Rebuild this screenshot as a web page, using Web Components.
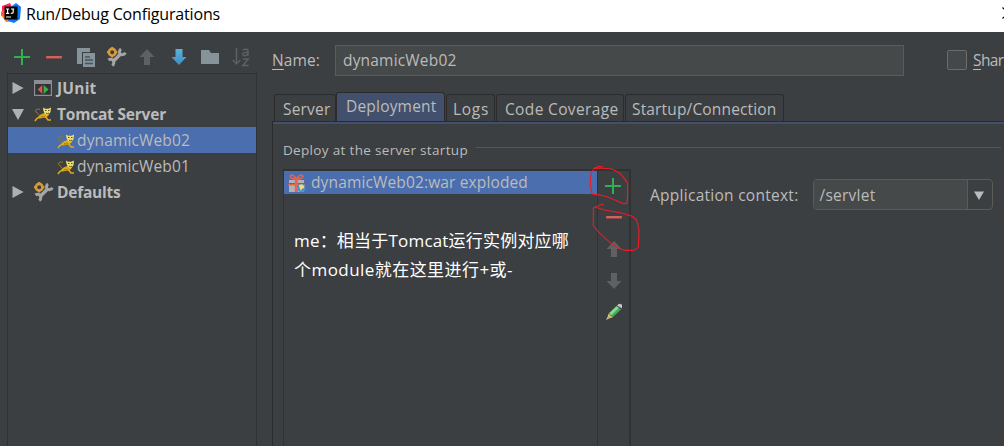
<!DOCTYPE html>
<html lang="zh">
<head>
<meta charset="utf-8">
<title>Run/Debug Configurations</title>
<style>
html,body{margin:0;height:100%;overflow:hidden;background:#3c3f41}
body{font:15.5px/20px "Open Sans","Noto Sans CJK SC",sans-serif;color:#bbb}
</style>
</head>
<body>
<run-dialog></run-dialog>
<script>
const define=(name,html,init)=>customElements.define(name,class extends HTMLElement{
  connectedCallback(){
    if(this.shadowRoot)return;
    this.attachShadow({mode:'open'}).innerHTML=html;
    if(init)init(this,this.shadowRoot);
  }
});

/* A single line of text, letter-spaced to the width given in "fit". */
define('ui-text','<style>:host{display:block;white-space:pre;flex:none}span{display:inline-block}</style><span><slot></slot></span>',(el,root)=>{
  const fit=parseFloat(el.getAttribute('fit'));
  if(!fit)return;
  const s=root.querySelector('span');
  const text=root.querySelector('slot').assignedNodes({flatten:true}).map(n=>n.textContent).join('');
  const w=s.getBoundingClientRect().width;
  s.style.letterSpacing=((fit-w)/[...text].length)+'px';
});

const wrench='<path stroke="#a3a5a6" stroke-width="3.600" d="M6.500 14 13.500 7"/><path fill="none" stroke="#a3a5a6" stroke-width="3" d="M14 2c-1.600 1.200-2 3.300-.8 4.700 1.400 1.500 4 1.300 5.200-.9M1.500 13c1.700-1.200 3.800-.8 4.800.7 1 1.700.4 3.800-1.100 4.800"/><circle cx="5.200" cy="5.200" r="4.200" fill="none" stroke="#3c3f41" stroke-width="2.500"/><circle cx="5.200" cy="5.200" r="3.300" fill="none" stroke="#d99a3a" stroke-width="2.600"/><path fill="#d99a3a" d="M4.200 0h2v2h-2zM4.200 8.500h2v2h-2zM0 4.200h2v2H0zM8.500 4.200h2v2h-2z"/>';
const icons={
  idea:[20,20,'<path fill="#fc801d" d="M0 12 5 19 12 18 9 10z"/><path fill="#fe2857" d="M1 3 9 0l3 6-8 7-3-3z"/><path fill="#fc5f3d" d="M0 9l4-3v6l-4 1z"/><path fill="#087cfa" d="M11 3l4-3 5 4-1 12-6 4-6-2z"/><path d="M3.500 3.500h13v13h-13z"/><path fill="none" stroke="#fff" stroke-width="1.200" d="M5 6h3.200M6.600 6v4.300M5 10.300h3.200M10 6h3.200M12.200 6v3c0 1.300-1.500 1.600-2.400.9M5 14h5"/>'],
  plus:[16,16,'<path fill="#30b04f" d="M7 0h2v7h7v2H9v7H7V9H0V7h7z"/>'],
  minus:[16,16,'<path fill="#c75450" d="M0 7h16v2.500H0z"/><path fill="#df7068" d="M1 7.500h14v1H1z"/>'],
  copy:[18,19,'<path fill="#87939a" d="M0 0h13v4H5v12H0z"/><path fill="#87939a" d="M6 5h12v14H6z"/><path stroke="#46545c" stroke-width="1.300" d="M8 9h5M8 12h8M8 15.500h8"/>'],
  wrench:[20,20,wrench],
  up:[16,16,'<path fill="#5f6061" d="M8 0l7.500 8H11v8H5V8H.5z"/>'],
  down:[16,16,'<path fill="#5f6061" d="M8 16 .5 8H5V0h6v8h4.500z"/>'],
  downblue:[16,16,'<defs><linearGradient id="g" x2="0" y2="1"><stop stop-color="#5cb2dc"/><stop offset="1" stop-color="#3b8fc2"/></linearGradient></defs><path fill="url(#g)" d="M8 16 .5 8H4.500V0h7v8h4z"/>'],
  folder:[18,16,'<path fill="#87939a" d="M0 1h8l2 3h8v11H0z"/>'],
  sort:[18,20,'<path fill="none" stroke="#5d5f61" stroke-width="1.500" d="M4.500 1v16M.7 13l3.800 4 3.800-4M11 3.300c1-1.500 5-1.500 5 .8v4.700M16 5.300c-3 0-5.300.3-5.300 2 0 2 4.300 1.700 5.300-.4M11 12h5.300l-5.500 6.500h6"/>'],
  right:[12,14,'<path fill="#b0b0b0" d="M.500 1l11 6-11 6z"/>'],
  open:[12,14,'<path fill="#b0b0b0" d="M0 2h12L6 13z"/>'],
  junit:[18,16,'<path fill="#313335" stroke="#8c8f91" stroke-width="1.200" d="M.6.6h16.800v14.800H.6z"/><path fill="#8c8f91" d="M0 0h18v4H0z"/><path fill="#d9534f" d="M8.300 5v9L3.500 9.500z"/><path fill="#3db04b" d="M9.700 5v9l4.800-4.500z"/>'],
  cat:[18,15,'<path fill="none" stroke="#8a7c34" stroke-width="1" d="M6 2.500C4.500 1.500 1.500 2 1.500 4S4.500 5.500 4.500 8"/><path fill="none" stroke="#dca91c" stroke-width="1.600" d="M6.500 9.500 2.800 11.500 1 14M11 9l3 4h3"/><path fill="#dca91c" d="M4.500 9l3-2 3-1 4 2.500-2.500 2-3 .5-4 .500z"/><path fill="#f3e36c" d="M9 .5l2 1.300h3.500L17 .5l-.500 4.500-2.500 3.500-3-1.500-1.500-3z"/><path stroke="#5a4c20" stroke-width="1" fill="none" d="M11 3.500h1.500M14 3.500h1.500M12 6l1.500.8L15 6"/><path fill="#8f6c12" d="M7 9.500h4v.8H7z"/>'],
  gift:[18,18,'<path fill="#b0b2b4" d="M1 6h15v3H1zM1 10h15v8H1z"/><path fill="#df6459" d="M6.800 6h3v12h-3zM0 10h17v1.500H0z"/><path fill="none" stroke="#e0655a" stroke-width="1.600" d="M8.500 5C6 .5 2 .3 2.300 2.600S6 5 8.500 5c2.500 0 6-.2 6.300-2.400S11 .5 8.500 5z"/><circle cx="13.500" cy="14" r="4" fill="#3e91d2"/><path fill="#f4dc74" d="M11 11l3-.8 2.500 2-1 2.300-1.700.3-.8 2.500-1.300-3z"/>'],
  pencil:[18,18,'<path fill="#45a955" d="M3.500 10.500 11.500 3l4.500 3.500-8.500 8z"/><path fill="#8bd98f" d="M4.500 10 11.500 3.300 13.800 5l-7.500 7.300z"/><path fill="#c5c7c8" d="M12 2.500l2-1.800 3 .8v4z"/><path fill="#e8b45c" d="M3.500 10.500 7.500 14.500 4 15.500 2.500 14z"/><path fill="#ccc" d="M2.500 14 4 15.500l-3 1.500z"/>'],
  tri:[10,9,'<path fill="#bbb" d="M0 .5h10L5 9z"/>'],
  close:[12,12,'<path fill="none" stroke="#000" stroke-width="1.200" d="M.5.500l11 11M11.500.500l-11 11"/>']
};
define('ui-icon','<style>:host{display:block;flex:none}svg{display:block}</style>',(el,root)=>{
  const [w,h,p]=icons[el.getAttribute('name')];
  root.innerHTML+=`<svg width="${w}" height="${h}" viewBox="0 0 ${w} ${h}">${p}</svg>`;
});

define('title-bar',`<style>
:host{display:flex;height:32px;box-sizing:border-box;background:#fff;color:#000;font-size:16px;padding:3px 0 0 1px;overflow:hidden}
ui-text{margin:1px 0 0 5px}
.close{margin:4px -10px 0 auto}
</style><ui-icon name="idea"></ui-icon><ui-text fit="194"><slot></slot></ui-text><ui-icon class="close" name="close"></ui-icon>`);

define('config-toolbar',`<style>:host{display:grid;height:41px;padding:9px 0 0 0;margin-left:-1px;box-sizing:border-box;grid-template-columns:32px 31.500px 32px 30px 31px 32px 30px 32px;align-items:center;justify-items:center}
</style>`+['plus','minus','copy','wrench','up','downblue','folder','sort'].map(n=>`<ui-icon name="${n}"></ui-icon>`).join(''));

define('tree-row',`<style>
:host{display:flex;align-items:center;height:26px;font-weight:700;padding-left:4px;box-sizing:border-box}
:host([child]){font-weight:400;padding-left:49px}
:host([selected]){background:#4b6eaf}
.box{width:19px;margin:0 4px 0 10px}
:host([child]) .box{margin:2px 1px 0 0}
</style><slot name="arrow"></slot><div class="box"><slot name="icon"></slot></div><slot></slot>`);

define('config-tree',`<style>
:host{display:block;flex:1;border:1px solid #323232;border-bottom:0;padding-top:1px}
</style>
<tree-row><ui-icon slot="arrow" name="right"></ui-icon><ui-icon slot="icon" name="junit"></ui-icon><ui-text fit="39.500">JUnit</ui-text></tree-row>
<tree-row><ui-icon slot="arrow" name="open"></ui-icon><ui-icon slot="icon" name="cat"></ui-icon><ui-text fit="109">Tomcat Server</ui-text></tree-row>
<tree-row child selected><ui-icon slot="icon" name="cat"></ui-icon><ui-text fit="113">dynamicWeb02</ui-text></tree-row>
<tree-row child><ui-icon slot="icon" name="cat"></ui-icon><ui-text fit="113">dynamicWeb01</ui-text></tree-row>
<tree-row><ui-icon slot="arrow" name="right"></ui-icon><ui-icon slot="icon" name="wrench"></ui-icon><ui-text fit="63.500">Defaults</ui-text></tree-row>`);

define('name-row',`<style>
:host{display:flex;height:60px;align-items:center;flex:none;box-sizing:border-box;padding-bottom:3px}
.field{box-sizing:border-box;width:569px;height:31px;flex:none;border:1px solid #5a5c5b;background:#45494a;margin-left:15px;padding:4px 7px}
.check{box-sizing:border-box;width:20px;height:20px;flex:none;border:1px solid #6b6b6b;border-radius:2px;background:#43494a;margin:-1px 6px 0 43px}
u{text-underline-offset:3px;text-decoration-thickness:1px}
.label{margin-top:-1px}
</style><ui-text class="label" fit="48"><u>N</u>ame:</ui-text><div class="field"><ui-text fit="113.500">dynamicWeb02</ui-text></div><div class="check"></div><ui-text class="label" fit="30.500"><u>S</u>har</ui-text>`);

define('tab-item',`<style>
:host{display:block;box-sizing:border-box;height:27px;border:1px solid #2b2b2b;border-bottom:0;border-radius:3px 3px 0 0;padding:4px 0 0 8px;margin-right:1px;flex:none}
:host([active]){height:30px;background:#43506d;padding-top:3px;padding-left:9px}
</style><slot></slot>`);

define('tab-strip',`<style>
:host{display:flex;height:29px;align-items:flex-end;padding-left:2px;flex:none}
tab-item[active]{margin-bottom:-1px}
</style>
<tab-item style="width:62px;margin-right:0"><ui-text fit="47.500">Server</ui-text></tab-item>
<tab-item active style="width:109px"><ui-text fit="90.500">Deployment</ui-text></tab-item>
<tab-item style="width:49px;padding-left:6px"><ui-text fit="36">Logs</ui-text></tab-item>
<tab-item style="width:128px"><ui-text fit="113.500">Code Coverage</ui-text></tab-item>
<tab-item style="width:159px;padding-left:6px"><ui-text fit="144.500">Startup/Connection</ui-text></tab-item>`);

define('artifact-list',`<style>
:host{display:flex;box-sizing:border-box;width:348px;height:277px;border:solid #323232;border-width:2px 2px 0 1px;flex:none}
.list{flex:1;border-right:1px solid #323232}
.item{display:flex;background:#4b6eaf;height:23px;align-items:center;padding-left:4px;gap:5px}
.item ui-text{margin-top:-1px}
.note{color:#fff;font-size:17px;line-height:29px;padding:32px 0 0 10px}
.tools{width:31px;display:grid;grid-template-rows:31px 31px 33px 31px 31px;align-content:start;justify-items:center;align-items:center;margin-top:-1px}
.tools ui-icon:first-child{margin-right:1px}
</style>
<div class="list"><div class="item"><ui-icon name="gift"></ui-icon><ui-text fit="217">dynamicWeb02:war exploded</ui-text></div>
<div class="note"><ui-text fit="275">me：相当于Tomcat运行实例对应哪</ui-text><ui-text fit="219">个module就在这里进行+或-</ui-text></div></div>
<div class="tools"><ui-icon name="plus"></ui-icon><ui-icon name="minus"></ui-icon><ui-icon name="up"></ui-icon><ui-icon name="down"></ui-icon><ui-icon name="pencil"></ui-icon></div>`);

define('combo-box',`<style>
:host{display:flex;box-sizing:border-box;width:180.500px;height:31px;border:1px solid #5a5c5b;border-radius:4px;background:#3c3f41;overflow:hidden}
.value{background:#45494a;border-right:1px solid #5a5c5b;padding:5px 0 0 6px;width:147px}
.arrow{flex:1;display:flex;align-items:center;justify-content:center;padding:2px 2px 0 0}
</style><div class="value"><slot></slot></div><div class="arrow"><ui-icon name="tri"></ui-icon></div>`);

define('deploy-panel',`<style>
:host{display:block;flex:1;box-sizing:border-box;border:solid #2b2b2b;border-width:1px 0 0 1px}
.strip{height:2px;background:#43506d}
.head{display:flex;align-items:center;height:45px;padding:7px 3px 0 10px;box-sizing:border-box;gap:8px;font-size:13.500px}
.rule{flex:1;height:1px;background:#555758;margin-top:-5px}
.body{display:flex;padding-left:10px;position:relative}
.ctx{display:flex;margin:10px 0 0 19px;height:31px;align-items:center;gap:14px}
.ink{position:absolute;left:287px;top:-9px;overflow:visible}
</style>
<div class="strip"></div>
<div class="head"><ui-text fit="185">Deploy at the server startup</ui-text><div class="rule"></div></div>
<div class="body"><artifact-list></artifact-list>
<div class="ctx"><ui-text fit="148.500">Application context:</ui-text><combo-box><ui-text fit="56">/servlet</ui-text></combo-box></div>
<svg class="ink" width="110" height="180" viewBox="0 0 330 540"><path fill="none" stroke="#ed1c24" stroke-width="3.300" stroke-linejoin="round" d="M129 21 118 19 104 24 94 36 91 60 93 90 97 102 125 106 145 112 165 120 190 131 201 130 203 100 203 70 195 58 178 38 155 27 120 24 102 26M131 136 128 132 100 144V198L120 220 150 248 175 265 195 271H222L235 262 237 210 230 180 215 168 180 158 130 149 108 142"/></svg>
</div>`);

define('run-dialog',`<style>
:host{display:flex;flex-direction:column;width:1004px;height:446px;overflow:hidden;background:#3c3f41}
main{display:flex;flex:1;min-height:0}
.left{display:flex;flex-direction:column;width:250px;padding-left:7px;flex:none}
.right{display:flex;flex-direction:column;flex:1;min-width:0;margin-left:15px}
</style>
<title-bar>Run/Debug Configurations</title-bar>
<main><div class="left"><config-toolbar></config-toolbar><config-tree></config-tree></div>
<div class="right"><name-row></name-row><tab-strip></tab-strip><deploy-panel></deploy-panel></div></main>`);
</script>
</body>
</html>
